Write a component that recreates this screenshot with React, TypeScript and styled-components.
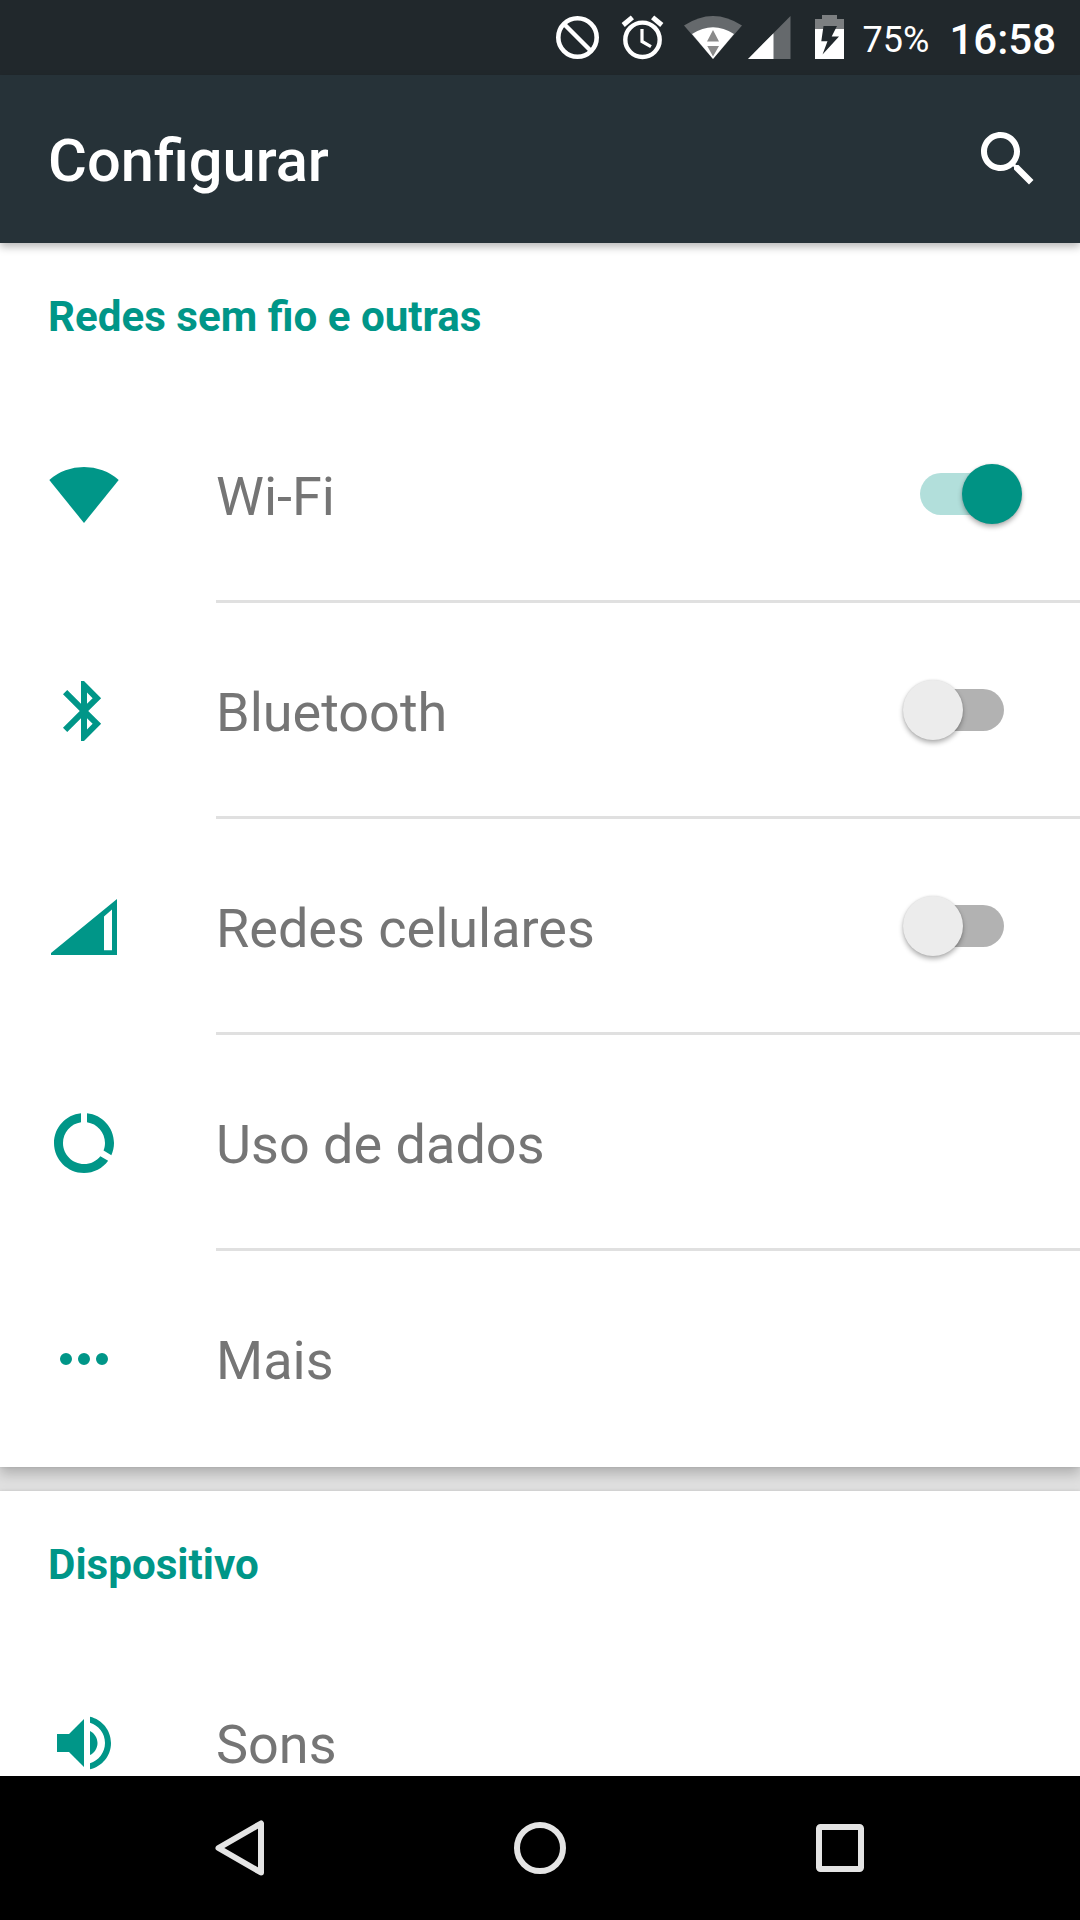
import React from "react";
import styled, { createGlobalStyle } from "styled-components";

const TEAL = "#009688";

const GlobalStyle = createGlobalStyle`
  html, body { margin: 0; padding: 0; background: #fff; overflow: hidden; }
  * { box-sizing: border-box; }
`;

const Screen = styled.div`
  width: 1080px;
  height: 1920px;
  display: flex;
  flex-direction: column;
  overflow: hidden;
  background: #e0e0e0;
  font-family: Roboto, "Noto Sans", sans-serif;
`;

const StatusBar = styled.div`
  flex: none;
  height: 75px;
  padding-right: 24px;
  display: flex;
  align-items: center;
  justify-content: flex-end;
  background: #21282c;
  color: #fff;
`;

const Glyph = styled.svg<{ $gap?: number }>`
  flex: none;
  display: block;
  margin-right: ${(p) => p.$gap ?? 0}px;
`;

const BatteryLevel = styled.span`
  font-size: 36px;
  line-height: 42px;
  padding-top: 5px;
  width: 66px;
  margin-right: 21px;
  white-space: nowrap;
`;

const Clock = styled.span`
  font-size: 42px;
  line-height: 48px;
  padding-top: 5px;
  font-weight: 500;
  white-space: nowrap;
`;

const Toolbar = styled.header`
  flex: none;
  position: relative;
  z-index: 1;
  height: 168px;
  padding: 0 36px 0 48px;
  display: flex;
  align-items: center;
  justify-content: space-between;
  background: #263238;
  box-shadow: 0 4px 8px rgba(0, 0, 0, 0.27);
`;

const Title = styled.h1`
  margin: 0;
  padding-top: 3px;
  font-size: 59.6px;
  line-height: 72px;
  font-weight: 500;
  color: #fff;
`;

const Content = styled.main`
  flex: 1;
  min-height: 0;
  overflow: hidden;
  display: flex;
  flex-direction: column;
  gap: 24px;
  background: #e0e0e0;
`;

const Card = styled.section`
  flex: none;
  background: #fff;
  box-shadow: 0 7px 12px rgba(0, 0, 0, 0.21), 0 0 3px rgba(0, 0, 0, 0.1);
`;

const SectionTitle = styled.h2`
  margin: 0;
  height: 144px;
  padding: 2px 48px 0;
  display: flex;
  align-items: center;
  font-size: 42.15px;
  font-weight: 700;
  color: ${TEAL};
`;

const Row = styled.div`
  height: 216px;
  padding-left: 48px;
  display: flex;
  align-items: stretch;
`;

const IconSlot = styled.div`
  width: 168px;
  display: flex;
  align-items: center;
  color: ${TEAL};
`;

const RowBody = styled.div<{ $divided: boolean }>`
  flex: 1;
  padding-right: 76px;
  display: flex;
  align-items: center;
  justify-content: space-between;
  border-bottom: 3px solid ${(p) => (p.$divided ? "#e0e0e0" : "transparent")};
`;

const Label = styled.span`
  padding-top: 7px;
  font-size: 54px;
  line-height: 64px;
  color: #757575;
`;

const Track = styled.div<{ $on: boolean }>`
  width: 84px;
  height: 42px;
  border-radius: 21px;
  display: flex;
  align-items: center;
  justify-content: ${(p) => (p.$on ? "flex-end" : "flex-start")};
  background: ${(p) => (p.$on ? "#b2dfdb" : "#b2b2b2")};
`;

const Thumb = styled.div<{ $on: boolean }>`
  flex: none;
  width: 60px;
  height: 60px;
  margin: 0 -17.5px;
  border-radius: 50%;
  background: ${(p) => (p.$on ? "#009384" : "#ececec")};
  box-shadow: 0 3px 5px rgba(0, 0, 0, 0.3), 0 0 2px rgba(0, 0, 0, 0.12);
`;

const NavBar = styled.nav`
  flex: none;
  height: 144px;
  padding: 0 90px;
  display: flex;
  align-items: center;
  background: #000;
`;

const NavButton = styled.div`
  flex: 1;
  display: flex;
  justify-content: center;
`;

const paths = {
  bluetooth:
    "M17.71 7.71L12 2h-1v7.59L6.41 5 5 6.41 10.59 12 5 17.59 6.41 19 11 14.41V22h1l5.71-5.71-4.3-4.29 4.3-4.29zM13 5.83l1.88 1.88L13 9.59V5.83zm1.88 10.46L13 18.17v-3.76l1.88 1.88z",
  data:
    "M13 2.05v3.03c3.39.49 6 3.39 6 6.92 0 .9-.18 1.75-.48 2.54l2.6 1.53c.56-1.24.88-2.62.88-4.07 0-5.18-3.95-9.45-9-9.95zM12 19c-3.87 0-7-3.13-7-7 0-3.53 2.61-6.43 6-6.92V2.05c-5.06.5-9 4.76-9 9.95 0 5.52 4.47 10 9.99 10 3.31 0 6.24-1.61 8.06-4.09l-2.6-1.53C16.17 17.98 14.21 19 12 19z",
  sound:
    "M3 9v6h4l5 5V4L7 9H3zm13.5 3c0-1.77-1.02-3.29-2.5-4.03v8.05c1.48-.73 2.5-2.25 2.5-4.02zM14 3.23v2.06c2.89.86 5 3.54 5 6.71s-2.11 5.85-5 6.71v2.06c4.01-.91 7-4.49 7-8.77s-2.99-7.86-7-8.77z",
  search:
    "M15.5 14h-.79l-.28-.27C15.41 12.59 16 11.11 16 9.5 16 5.91 13.09 3 9.5 3S3 5.91 3 9.5 5.91 16 9.5 16c1.61 0 3.09-.59 4.23-1.57l.27.28v.79l5 4.99L20.49 19l-4.99-5zm-6 0C7.01 14 5 11.99 5 9.5S7.01 5 9.5 5 14 7.01 14 9.5 11.99 14 9.5 14z",
  wifi: "M36 64 1.3 21A52.8 52.8 0 0 1 70.7 21Z",
  cell: "M3 62 69 8V64H3ZM56 25.5V59.3H64V18.5Z",
  more: "M12 36a6 6 0 1 0 12 0a6 6 0 1 0-12 0M30 36a6 6 0 1 0 12 0a6 6 0 1 0-12 0M48 36a6 6 0 1 0 12 0a6 6 0 1 0-12 0",
};

const Icon = ({ d, box = 24 }: { d: string; box?: number }) => (
  <Glyph width="72" height="72" viewBox={`0 0 ${box} ${box}`} fill="currentColor" fillRule="evenodd">
    <path d={d} />
  </Glyph>
);

type Item = { label: string; d: string; box?: number; on?: boolean };

const sections: { title: string; items: Item[] }[] = [
  {
    title: "Redes sem fio e outras",
    items: [
      { label: "Wi-Fi", d: paths.wifi, box: 72, on: true },
      { label: "Bluetooth", d: paths.bluetooth, on: false },
      { label: "Redes celulares", d: paths.cell, box: 72, on: false },
      { label: "Uso de dados", d: paths.data },
      { label: "Mais", d: paths.more, box: 72 },
    ],
  },
  { title: "Dispositivo", items: [{ label: "Sons", d: paths.sound }] },
];

const StatusIcons = () => (
  <>
    <Glyph $gap={21} width="44" height="75" viewBox="556 0 44 75" fill="none" stroke="#fff">
      <circle cx="577.5" cy="37.5" r="19.2" strokeWidth="4.6" />
      <path d="M564 24 591 51" strokeWidth="4.4" />
    </Glyph>
    <Glyph $gap={20} width="43" height="75" viewBox="621 0 43 75" fill="none" stroke="#fff">
      <circle cx="642.5" cy="39.8" r="17.2" strokeWidth="4.4" />
      <path d="M623.2 25 632.4 17.4M652.6 17.4 661.8 25" strokeWidth="5" />
      <path d="M642 29V41.5L651 46.7" strokeWidth="3.2" />
    </Glyph>
    <Glyph $gap={4} width="60" height="75" viewBox="684 0 60 75">
      <path d="M713 59 684 25.5Q713 6.5 742 25.5Z" fill="#65696c" />
      <path d="M713 59 692 34Q713 20.5 734 34Z" fill="#fff" />
      <path d="M713 30 719 41.5H707ZM707.3 46H719L713 56.5Z" fill="#8a8a8a" />
    </Glyph>
    <Glyph $gap={24} width="43" height="75" viewBox="747.5 0 43 75">
      <path d="M747.5 59 790 16V59Z" fill="#65696c" />
      <path d="M747.5 59 773 33.2V59Z" fill="#fff" />
    </Glyph>
    <Glyph $gap={18} width="29" height="75" viewBox="815 0 29 75">
      <path d="M815 19H822V15H837V19H844V29H815Z" fill="#7c7f81" />
      <path d="M815 29H844V59H815Z" fill="#fff" />
      <path d="M823.5 26H837L831.7 36.5H839L822.5 54.5L827.5 41.3H821.3Z" fill="#21282c" />
    </Glyph>
  </>
);

export default function App() {
  return (
    <Screen>
      <GlobalStyle />
      <StatusBar>
        <StatusIcons />
        <BatteryLevel>75%</BatteryLevel>
        <Clock>16:58</Clock>
      </StatusBar>
      <Toolbar>
        <Title>Configurar</Title>
        <Glyph width="72" height="72" viewBox="0 0 24 24" fill="#fff">
          <path d={paths.search} />
        </Glyph>
      </Toolbar>
      <Content>
        {sections.map((section) => (
          <Card key={section.title}>
            <SectionTitle>{section.title}</SectionTitle>
            {section.items.map((item, i) => (
              <Row key={item.label}>
                <IconSlot>
                  <Icon d={item.d} box={item.box} />
                </IconSlot>
                <RowBody $divided={i < section.items.length - 1}>
                  <Label>{item.label}</Label>
                  {item.on !== undefined && (
                    <Track $on={item.on}>
                      <Thumb $on={item.on} />
                    </Track>
                  )}
                </RowBody>
              </Row>
            ))}
          </Card>
        ))}
      </Content>
      <NavBar>
        <NavButton>
          <Glyph width="72" height="72" viewBox="204 1812 72 72" fill="none" stroke="#e4e4e4" strokeWidth="6" strokeLinejoin="round">
            <path d="M218.5 1848 261 1823.5V1872.5Z" />
          </Glyph>
        </NavButton>
        <NavButton>
          <Glyph width="72" height="72" viewBox="0 0 72 72" fill="none" stroke="#e4e4e4" strokeWidth="6">
            <circle cx="36" cy="36" r="23" />
          </Glyph>
        </NavButton>
        <NavButton>
          <Glyph width="72" height="72" viewBox="0 0 72 72" fill="none" stroke="#e4e4e4" strokeWidth="6">
            <rect x="15" y="15" width="42" height="42" rx="1.5" />
          </Glyph>
        </NavButton>
      </NavBar>
    </Screen>
  );
}
